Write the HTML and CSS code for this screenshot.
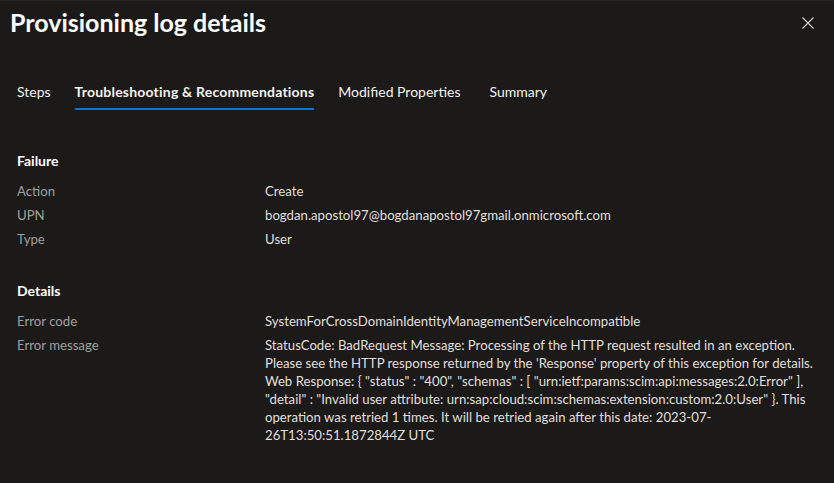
FILE: index.html
```html
<!DOCTYPE html>
<html lang="en">
<head>
<meta charset="utf-8">
<title>Provisioning log details</title>
<link rel="stylesheet" href="styles.css">
</head>
<body>
<div class="panel">
  <header class="panel-header">
    <h1 class="panel-title">Provisioning log details</h1>
    <button class="close-btn" aria-label="Close">
      <svg width="12" height="12" viewBox="0 0 12 12"><path d="M0.5 0.5L11.5 11.5M11.5 0.5L0.5 11.5" stroke="#d2d0ce" stroke-width="1.1" fill="none"/></svg>
    </button>
  </header>
  <nav class="tabs">
    <span class="tab">Steps</span>
    <span class="tab active">Troubleshooting &amp; Recommendations</span>
    <span class="tab">Modified Properties</span>
    <span class="tab last">Summary</span>
  </nav>
  <section class="section section-failure">
    <h2 class="section-title">Failure</h2>
    <div class="rows">
      <div class="row"><span class="label">Action</span><span class="value">Create</span></div>
      <div class="row"><span class="label">UPN</span><span class="value">bogdan.apostol97@bogdanapostol97gmail.onmicrosoft.com</span></div>
      <div class="row"><span class="label">Type</span><span class="value">User</span></div>
    </div>
  </section>
  <section class="section section-details">
    <h2 class="section-title">Details</h2>
    <div class="rows">
      <div class="row"><span class="label">Error code</span><span class="value">SystemForCrossDomainIdentityManagementServiceIncompatible</span></div>
      <div class="row"><span class="label">Error message</span><span class="value">StatusCode: BadRequest Message: Processing of the HTTP request resulted in an exception.<br>Please see the HTTP response returned by the 'Response' property of this exception for details.<br>Web Response: { "status" : "400", "schemas" : [ "urn:ietf:params:scim:api:messages:2.0:Error" ],<br>"detail" : "Invalid user attribute: urn:sap:cloud:scim:schemas:extension:custom:2.0:User" }. This<br>operation was retried 1 times. It will be retried again after this date: 2023-07-<br>26T13:50:51.1872844Z UTC</span></div>
    </div>
  </section>
</div>
</body>
</html>
```
FILE: styles.css
```css
* { box-sizing: border-box; }
html, body { margin: 0; height: 100%; }
body {
  background: #1b1a19;
  color: #f3f2f1;
  font-family: "Lato", "Open Sans", sans-serif;
  overflow: hidden;
}
.panel {
  height: 100%;
  border-top: 1px solid #252423;
}
.panel-header {
  display: flex;
  justify-content: space-between;
  align-items: flex-start;
  padding: 5px 20px 0 10px;
}
.panel-title {
  margin: 0;
  font-size: 25px;
  font-weight: 700;
  line-height: 32px;
  color: #ffffff;
}
.close-btn {
  background: none;
  border: 0;
  padding: 0;
  margin-top: 11px;
  width: 12px;
  height: 12px;
  display: flex;
}
.tabs {
  display: flex;
  gap: 24px;
  padding: 44px 0 0 17px;
}
.tab {
  font-size: 14px;
  line-height: 20px;
  padding-bottom: 6px;
  border-bottom: 2px solid transparent;
  color: #f3f2f1;
}
.tab.active {
  font-weight: 700;
  letter-spacing: 0.2px;
  border-bottom-color: #0078d4;
}
.tab.last { margin-left: 5px; }
.section {
  padding-left: 17px;
}
.section-failure { margin-top: 42px; }
.section-details { margin-top: 34px; }
.section-title {
  margin: 0 0 12px;
  font-size: 14px;
  font-weight: 700;
  line-height: 18px;
  color: #ffffff;
}
.rows {
  display: flex;
  flex-direction: column;
  gap: 6px;
}
.row {
  display: flex;
  font-size: 13.2px;
  line-height: 18px;
}
.label {
  width: 248px;
  flex: none;
  color: #a19f9d;
}
.value {
  width: 566px;
  color: #e1dfdd;
}
```
